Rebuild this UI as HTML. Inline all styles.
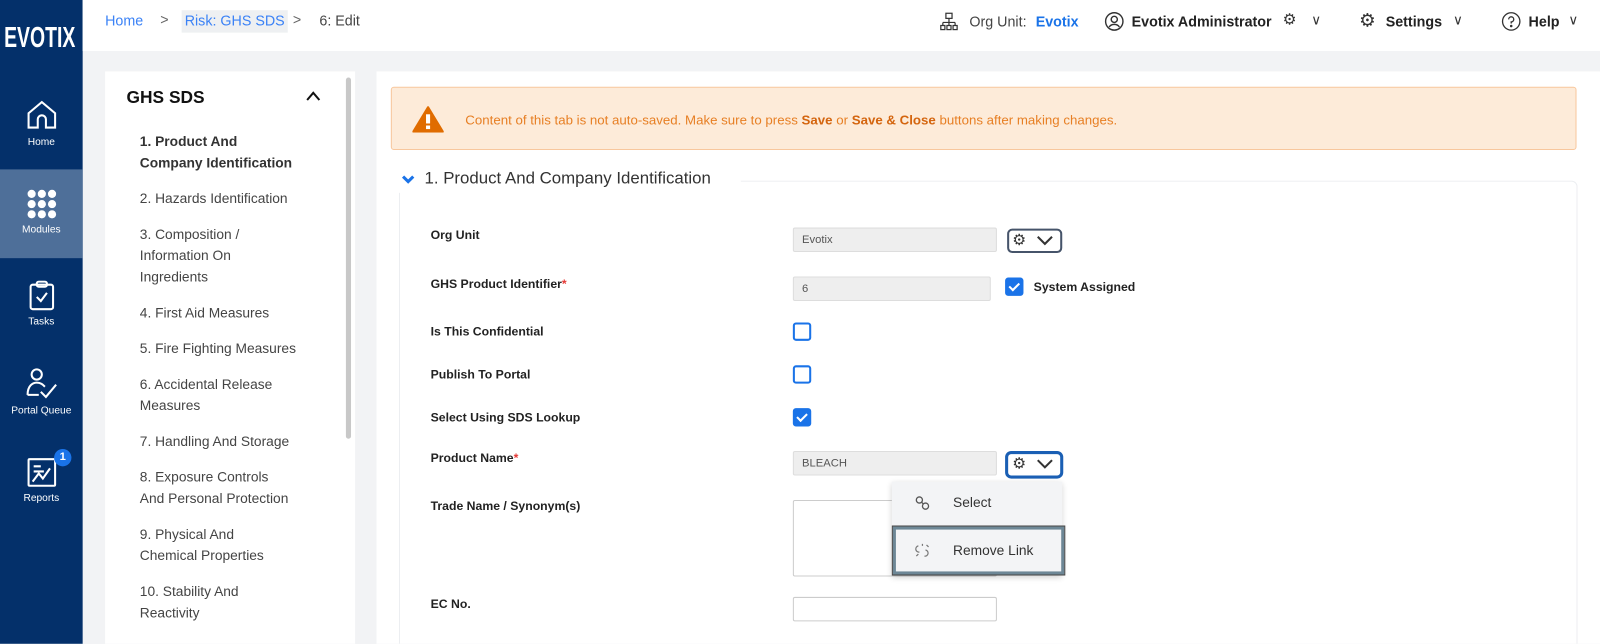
<!DOCTYPE html>
<html><head><meta charset="utf-8"><style>
*{box-sizing:border-box;margin:0;padding:0}
html,body{width:1600px;height:644px;overflow:hidden;background:#f2f3f5}
body{font-family:"Liberation Sans",sans-serif;color:#222}
#wrap{position:absolute;left:0;top:0;width:1568px;height:631px;overflow:hidden;transform:scale(1.0204);transform-origin:0 0}
.abs{position:absolute}
#side{left:0;top:0;width:81px;height:631px;background:#04306a}
.nav{position:absolute;left:0;width:81px;text-align:center;color:#fff;font-size:10px}
#top{left:81px;top:0;width:1487px;height:50px;background:#fff}
.lbl{position:absolute;left:422px;font-size:12px;font-weight:bold;color:#222}
.inp{position:absolute;left:777px;width:200px;height:24px;background:#eee;border:1px solid #ddd;border-radius:2px;font-size:11px;color:#555;padding:5px 8px}
.cb{position:absolute;left:777px;width:18px;height:18px;border:2px solid #1a73e8;border-radius:3px;background:#fff}
.cbc{background:#1a73e8}
.cbc:after{content:"";position:absolute;left:4px;top:1px;width:4px;height:8px;border:solid #fff;border-width:0 2px 2px 0;transform:rotate(45deg)}
.gb{position:absolute;left:987px;width:54px;height:24px;border:2px solid #46546a;border-radius:5px;background:#fff}
.toc{position:absolute;left:137px;font-size:13.5px;color:#444;line-height:21px}
</style></head><body><div id="wrap">
<div id="side" class="abs">
<div class="abs" style="left:4px;top:21px;color:#fff;font-weight:bold;font-size:28px;letter-spacing:0px;transform:scaleX(.68);transform-origin:left">EVOTIX</div>
<div class="nav" style="top:96px"><svg width="32" height="32" viewBox="0 0 32 32" fill="none" stroke="#fff" stroke-width="2"><path d="M3 15 L16 4 L29 15 V29 H20 V21 A4 4 0 0 0 12 21 V29 H3 Z"/></svg><div style="margin-top:3px">Home</div></div>
<div class="abs" style="left:0;top:166px;width:81px;height:87px;background:#4e6f99"></div>
<div class="nav" style="top:185px"><svg width="32" height="30" viewBox="0 0 32 30" fill="#fff"><circle cx="6" cy="5" r="4"/><circle cx="16" cy="5" r="4"/><circle cx="26" cy="5" r="4"/><circle cx="6" cy="15" r="4"/><circle cx="16" cy="15" r="4"/><circle cx="26" cy="15" r="4"/><circle cx="6" cy="25" r="4"/><circle cx="16" cy="25" r="4"/><circle cx="26" cy="25" r="4"/></svg><div style="margin-top:2px">Modules</div></div>
<div class="nav" style="top:275px"><svg width="28" height="30" viewBox="0 0 28 30" fill="none" stroke="#fff" stroke-width="2"><rect x="3" y="4" width="22" height="24" rx="2"/><rect x="9" y="1" width="10" height="5" rx="2"/><path d="M9 16 L13 20 L19 12"/></svg><div style="margin-top:2px">Tasks</div></div>
<div class="nav" style="top:360px"><svg width="34" height="32" viewBox="0 0 34 32" fill="none" stroke="#fff" stroke-width="2"><circle cx="12" cy="7" r="5"/><path d="M3 27 C3 18 8 15 12 15 C16 15 18 17 20 19 M3 27 H14 M16 24 L21 29 L31 17"/></svg><div style="margin-top:2px">Portal Queue</div></div>
<div class="nav" style="top:448px"><svg width="30" height="30" viewBox="0 0 30 30" fill="none" stroke="#fff" stroke-width="2"><rect x="2" y="2" width="26" height="26" rx="1"/><path d="M7 9 H14 M7 14 H17 M6 24 L12 16 L16 21 L23 11"/></svg><div style="margin-top:2px">Reports</div></div>
<div class="abs" style="left:53px;top:440px;width:17px;height:17px;border-radius:50%;background:#1a73e8;color:#fff;font-size:11px;font-weight:bold;text-align:center;line-height:17px">1</div>
</div>
<div id="top" class="abs"></div>
<div class="abs" style="left:103px;top:12px;font-size:14px;color:#3b82f6">Home</div>
<div class="abs" style="left:157px;top:11px;font-size:14px;color:#666">&gt;</div>
<div class="abs" style="left:178px;top:10px;height:22px;padding:2px 3px;background:#eef0f2;font-size:14px;color:#3b82f6">Risk: GHS SDS</div>
<div class="abs" style="left:287px;top:11px;font-size:14px;color:#666">&gt;</div>
<div class="abs" style="left:313px;top:12px;font-size:14px;color:#444">6: Edit</div>
<svg class="abs" style="left:921px;top:12px" width="18" height="18" viewBox="0 0 18 18" fill="none" stroke="#333" stroke-width="1.2"><rect x="6" y="1" width="6" height="5"/><path d="M9 6V10 M3 10H15 M3 10V13 M9 10V13 M15 10V13"/><rect x="1" y="13" width="4" height="4"/><rect x="7" y="13" width="4" height="4"/><rect x="13" y="13" width="4" height="4"/></svg>
<div class="abs" style="left:950px;top:13px;font-size:14px;color:#444">Org Unit:</div>
<div class="abs" style="left:1015px;top:13px;font-size:14px;color:#1a73e8;font-weight:bold">Evotix</div>
<svg class="abs" style="left:1082px;top:11px" width="20" height="20" viewBox="0 0 20 20" fill="none" stroke="#333" stroke-width="1.4"><circle cx="10" cy="10" r="8.5"/><circle cx="10" cy="8" r="3"/><path d="M5 15.5 C7 12 13 12 15 15.5"/></svg>
<div class="abs" style="left:1109px;top:13px;font-size:14px;font-weight:bold;color:#222">Evotix Administrator</div>
<div class="abs" style="left:1257px;top:10px;font-size:15px;color:#333">⚙</div>
<div class="abs" style="left:1285px;top:12px;font-size:13px;color:#333">∨</div>
<div class="abs" style="left:1332px;top:10px;font-size:18px;color:#333">⚙</div>
<div class="abs" style="left:1358px;top:13px;font-size:14px;font-weight:bold">Settings</div>
<div class="abs" style="left:1424px;top:12px;font-size:13px;color:#333">∨</div>
<svg class="abs" style="left:1471px;top:11px" width="20" height="20" viewBox="0 0 20 20" fill="none" stroke="#333" stroke-width="1.3"><circle cx="10" cy="10" r="8.5"/><path d="M7.5 8 A2.5 2.5 0 1 1 10 10.5 V12"/><circle cx="10" cy="14.5" r=".6" fill="#333"/></svg>
<div class="abs" style="left:1498px;top:13px;font-size:14px;font-weight:bold">Help</div>
<div class="abs" style="left:1537px;top:12px;font-size:13px;color:#333">∨</div>

<div class="abs" style="left:103px;top:70px;width:245px;height:561px;background:#fff"></div>
<div class="abs" style="left:339px;top:76px;width:5px;height:354px;background:#c8c8c8;border-radius:3px"></div>
<div class="abs" style="left:124px;top:86px;font-size:17px;font-weight:bold;color:#111">GHS SDS</div>
<svg class="abs" style="left:299px;top:88px" width="16" height="12" viewBox="0 0 16 12" fill="none" stroke="#111" stroke-width="2"><path d="M2 10 L8 3 L14 10"/></svg>
<div class="toc" style="top:128px;font-weight:bold;color:#333">1. Product And<br>Company Identification</div>
<div class="toc" style="top:184px">2. Hazards Identification</div>
<div class="toc" style="top:219px">3. Composition /<br>Information On<br>Ingredients</div>
<div class="toc" style="top:296px">4. First Aid Measures</div>
<div class="toc" style="top:331px">5. Fire Fighting Measures</div>
<div class="toc" style="top:366px">6. Accidental Release<br>Measures</div>
<div class="toc" style="top:422px">7. Handling And Storage</div>
<div class="toc" style="top:457px">8. Exposure Controls<br>And Personal Protection</div>
<div class="toc" style="top:513px">9. Physical And<br>Chemical Properties</div>
<div class="toc" style="top:569px">10. Stability And<br>Reactivity</div>

<div class="abs" style="left:369px;top:70px;width:1199px;height:561px;background:#fff"></div>
<div class="abs" style="left:383px;top:85px;width:1162px;height:62px;background:#fdebd9;border:1px solid #f8c79d;border-radius:3px"></div>
<svg class="abs" style="left:404px;top:104px" width="31" height="26" viewBox="0 0 31 26"><path d="M15.5 1 L30 25 H1 Z" fill="#e06c00" stroke="#e06c00" stroke-linejoin="round" stroke-width="2"/><rect x="13.5" y="8" width="4" height="9" fill="#fff"/><rect x="13.5" y="19" width="4" height="3.5" fill="#fff"/></svg>
<div class="abs" style="left:456px;top:110px;font-size:13px;color:#e77f24">Content of this tab is not auto-saved. Make sure to press <b style="color:#d4650f">Save</b> or <b style="color:#d4650f">Save &amp; Close</b> buttons after making changes.</div>
<div class="abs" style="left:391px;top:177px;width:1155px;height:454px;border:1px solid #eceef1;border-bottom:none;border-radius:6px 6px 0 0"></div>
<div class="abs" style="left:386px;top:163px;width:340px;height:26px;background:#fff"></div>
<svg class="abs" style="left:393px;top:171px" width="14" height="10" viewBox="0 0 14 10" fill="none" stroke="#1a73e8" stroke-width="3"><path d="M2 2 L7 7 L12 2"/></svg>
<div class="abs" style="left:416px;top:166px;font-size:16.5px;color:#333">1. Product And Company Identification</div>

<div class="lbl" style="top:223px">Org Unit</div>
<div class="inp" style="top:223px">Evotix</div>
<div class="gb" style="top:224px"></div>
<div class="lbl" style="top:271px">GHS Product Identifier<span style="color:#e53935">*</span></div>
<div class="inp" style="top:271px;width:194px">6</div>
<div class="cb cbc" style="left:985px;top:272px"></div>
<div class="abs" style="left:1013px;top:274px;font-size:12px;font-weight:bold">System Assigned</div>
<div class="lbl" style="top:318px">Is This Confidential</div>
<div class="cb" style="top:316px"></div>
<div class="lbl" style="top:360px">Publish To Portal</div>
<div class="cb" style="top:358px"></div>
<div class="lbl" style="top:402px">Select Using SDS Lookup</div>
<div class="cb cbc" style="top:400px"></div>
<div class="lbl" style="top:442px">Product Name<span style="color:#e53935">*</span></div>
<div class="inp" style="top:442px">BLEACH</div>
<div class="gb" style="top:442px;left:985px;width:57px;height:27px;border:3px solid #1a5fb4;border-radius:6px"></div>
<div class="lbl" style="top:489px">Trade Name / Synonym(s)</div>
<div class="abs" style="left:777px;top:490px;width:200px;height:75px;border:1px solid #ccc;border-radius:2px"></div>
<div class="lbl" style="top:585px">EC No.</div>
<div class="abs" style="left:777px;top:585px;width:200px;height:24px;border:1px solid #ccc;border-radius:2px"></div>
<div class="abs" style="left:992px;top:226px;font-size:15px;color:#333">⚙</div>
<svg class="abs" style="left:1016px;top:231px" width="16" height="10" viewBox="0 0 16 10" fill="none" stroke="#333" stroke-width="2"><path d="M1 1 L8 8 L15 1"/></svg>
<div class="abs" style="left:992px;top:445px;font-size:15px;color:#333">⚙</div>
<svg class="abs" style="left:1016px;top:450px" width="16" height="10" viewBox="0 0 16 10" fill="none" stroke="#333" stroke-width="2"><path d="M1 1 L8 8 L15 1"/></svg>
<div class="abs" style="left:874px;top:472px;width:167px;height:92px;background:#f3f4f6;box-shadow:0 2px 6px rgba(0,0,0,.2)"></div>
<svg class="abs" style="left:896px;top:485px" width="16" height="16" viewBox="0 0 16 16" fill="none" stroke="#555" stroke-width="1.3"><circle cx="5" cy="5" r="3"/><circle cx="11" cy="11" r="3"/><path d="M7 7 L9 9"/></svg>
<div class="abs" style="left:934px;top:485px;font-size:13.5px;color:#333">Select</div>
<div class="abs" style="left:875px;top:516px;width:168px;height:47px;border:3px solid #6d8796;outline:1px solid #444;background:#f3f4f6"></div>
<svg class="abs" style="left:896px;top:532px" width="16" height="16" viewBox="0 0 16 16" fill="none" stroke="#777" stroke-width="1.2"><path d="M4 3 A3 3 0 0 0 5 9 M11 7 A3 3 0 0 1 10 13 M2 13 L4 11 M12 2 L14 4 M8 1 V3"/></svg>
<div class="abs" style="left:934px;top:532px;font-size:13.5px;color:#333">Remove Link</div>
</div></body></html>
